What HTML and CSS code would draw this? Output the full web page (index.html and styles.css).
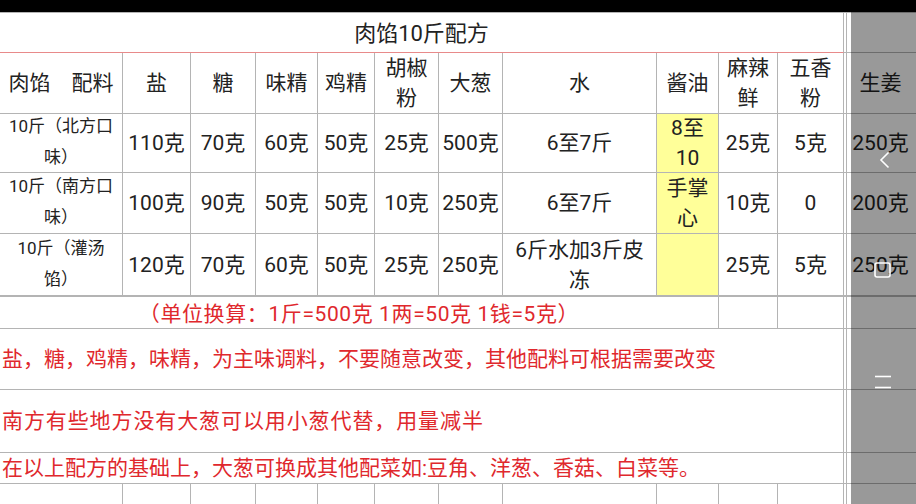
FILE: index.html
```html
<!DOCTYPE html>
<html lang="zh-CN">
<head>
<meta charset="utf-8">
<title>肉馅10斤配方</title>
<link rel="stylesheet" href="styles.css">
</head>
<body>
<div class="screen">
  <div class="statusbar"></div>
  <div class="sheet">
    <div class="c title span11">肉馅10斤配方</div>
    <div class="c last"></div>

    <div class="c">肉馅　配料</div>
    <div class="c">盐</div>
    <div class="c">糖</div>
    <div class="c">味精</div>
    <div class="c">鸡精</div>
    <div class="c">胡椒<br>粉</div>
    <div class="c">大葱</div>
    <div class="c">水</div>
    <div class="c">酱油</div>
    <div class="c">麻辣<br>鲜</div>
    <div class="c">五香<br>粉</div>
    <div class="c last">生姜</div>

    <div class="c name">10斤（北方口<br>味）</div>
    <div class="c">110克</div>
    <div class="c">70克</div>
    <div class="c">60克</div>
    <div class="c">50克</div>
    <div class="c">25克</div>
    <div class="c">500克</div>
    <div class="c">6至7斤</div>
    <div class="c hl">8至<br>10</div>
    <div class="c">25克</div>
    <div class="c">5克</div>
    <div class="c last">250克</div>

    <div class="c name">10斤（南方口<br>味）</div>
    <div class="c">100克</div>
    <div class="c">90克</div>
    <div class="c">50克</div>
    <div class="c">50克</div>
    <div class="c">10克</div>
    <div class="c">250克</div>
    <div class="c">6至7斤</div>
    <div class="c hl">手掌<br>心</div>
    <div class="c">10克</div>
    <div class="c">0</div>
    <div class="c last">200克</div>

    <div class="c name thick">10斤（灌汤<br>馅）</div>
    <div class="c thick">120克</div>
    <div class="c thick">70克</div>
    <div class="c thick">60克</div>
    <div class="c thick">50克</div>
    <div class="c thick">25克</div>
    <div class="c thick">250克</div>
    <div class="c thick">6斤水加3斤皮<br>冻</div>
    <div class="c hl thick"></div>
    <div class="c thick">25克</div>
    <div class="c thick">5克</div>
    <div class="c last thick">250克</div>

    <div class="c red units span9">（单位换算：1斤=500克 1两=50克 1钱=5克）</div>
    <div class="c"></div>
    <div class="c"></div>
    <div class="c last"></div>

    <div class="c red note span11">盐，糖，鸡精，味精，为主味调料，不要随意改变，其他配料可根据需要改变</div>
    <div class="c last"></div>

    <div class="c red note span11 wide">南方有些地方没有大葱可以用小葱代替，用量减半</div>
    <div class="c last"></div>

    <div class="c red note span11">在以上配方的基础上，大葱可换成其他配菜如:豆角、洋葱、香菇、白菜等。</div>
    <div class="c last"></div>

    <div class="c"></div>
    <div class="c"></div>
    <div class="c"></div>
    <div class="c"></div>
    <div class="c"></div>
    <div class="c"></div>
    <div class="c"></div>
    <div class="c"></div>
    <div class="c"></div>
    <div class="c"></div>
    <div class="c"></div>
    <div class="c last"></div>
  </div>

  <div class="navpanel">
    <svg class="nav-back" width="12" height="18" viewBox="0 0 12 18">
      <polyline points="9.5,1.5 2,9 9.5,16.5" fill="none" stroke="#fff" stroke-width="1.6"/>
    </svg>
    <svg class="nav-home" width="17" height="16" viewBox="0 0 17 16">
      <rect x="1" y="1" width="15" height="14" rx="2" fill="none" stroke="#fff" stroke-width="1.6"/>
    </svg>
    <svg class="nav-menu" width="18" height="14" viewBox="0 0 18 14">
      <line x1="1" y1="1.5" x2="17" y2="1.5" stroke="#fff" stroke-width="1.6"/>
      <line x1="1" y1="12.5" x2="17" y2="12.5" stroke="#fff" stroke-width="1.6"/>
    </svg>
  </div>
</div>
</body>
</html>
```

FILE: styles.css
```css
html, body {
  margin: 0;
  padding: 0;
  background: #fff;
}

body {
  width: 916px;
  height: 504px;
  overflow: hidden;
  font-family: Roboto, "Noto Sans CJK SC", "Noto Sans", sans-serif;
  color: #222;
}

.screen {
  position: relative;
  width: 916px;
  height: 504px;
  overflow: hidden;
}

.statusbar {
  height: 12px;
  background: #000;
}

.sheet {
  display: grid;
  grid-template-columns: 123px 68px 65px 62px 57px 64px 64px 154px 62px 59px 66px 74px;
  grid-template-rows: 40px 61px 59px 61px 63px 32px 61px 63px 31px 30px;
  width: 918px;
  border-top: 1px solid #b4b4b4;
}

.c {
  box-sizing: border-box;
  border-right: 1px solid #b4b4b4;
  border-bottom: 1px solid #b4b4b4;
  display: flex;
  align-items: center;
  justify-content: center;
  text-align: center;
  font-size: 21px;
  line-height: 30px;
  white-space: nowrap;
  overflow: hidden;
}

.c.last {
  box-shadow: inset 2px 0 0 #fff, inset 3px 0 0 #b4b4b4;
}

.span11 { grid-column: span 11; }
.span9 { grid-column: span 9; }

.title {
  font-size: 22px;
  padding-top: 2px;
  border-bottom-color: #e88a8a;
}

.name {
  font-size: 17px;
  line-height: 31px;
  padding-bottom: 2px;
}

.hl {
  background: #ffff99;
}

.thick {
  border-bottom-width: 2px;
}

.red {
  color: #e0282d;
}

.units {
  padding-top: 3px;
  letter-spacing: 0.6px;
}

.note {
  justify-content: flex-start;
  padding-left: 2px;
}

.note.wide {
  letter-spacing: 0.9px;
}

.navpanel {
  position: absolute;
  left: 851px;
  top: 12px;
  width: 65px;
  height: 492px;
  background: rgba(0, 0, 0, 0.4);
}

.nav-back {
  position: absolute;
  left: 28px;
  top: 139px;
}

.nav-home {
  position: absolute;
  left: 23px;
  top: 250px;
}

.nav-menu {
  position: absolute;
  left: 23px;
  top: 363px;
}
```
